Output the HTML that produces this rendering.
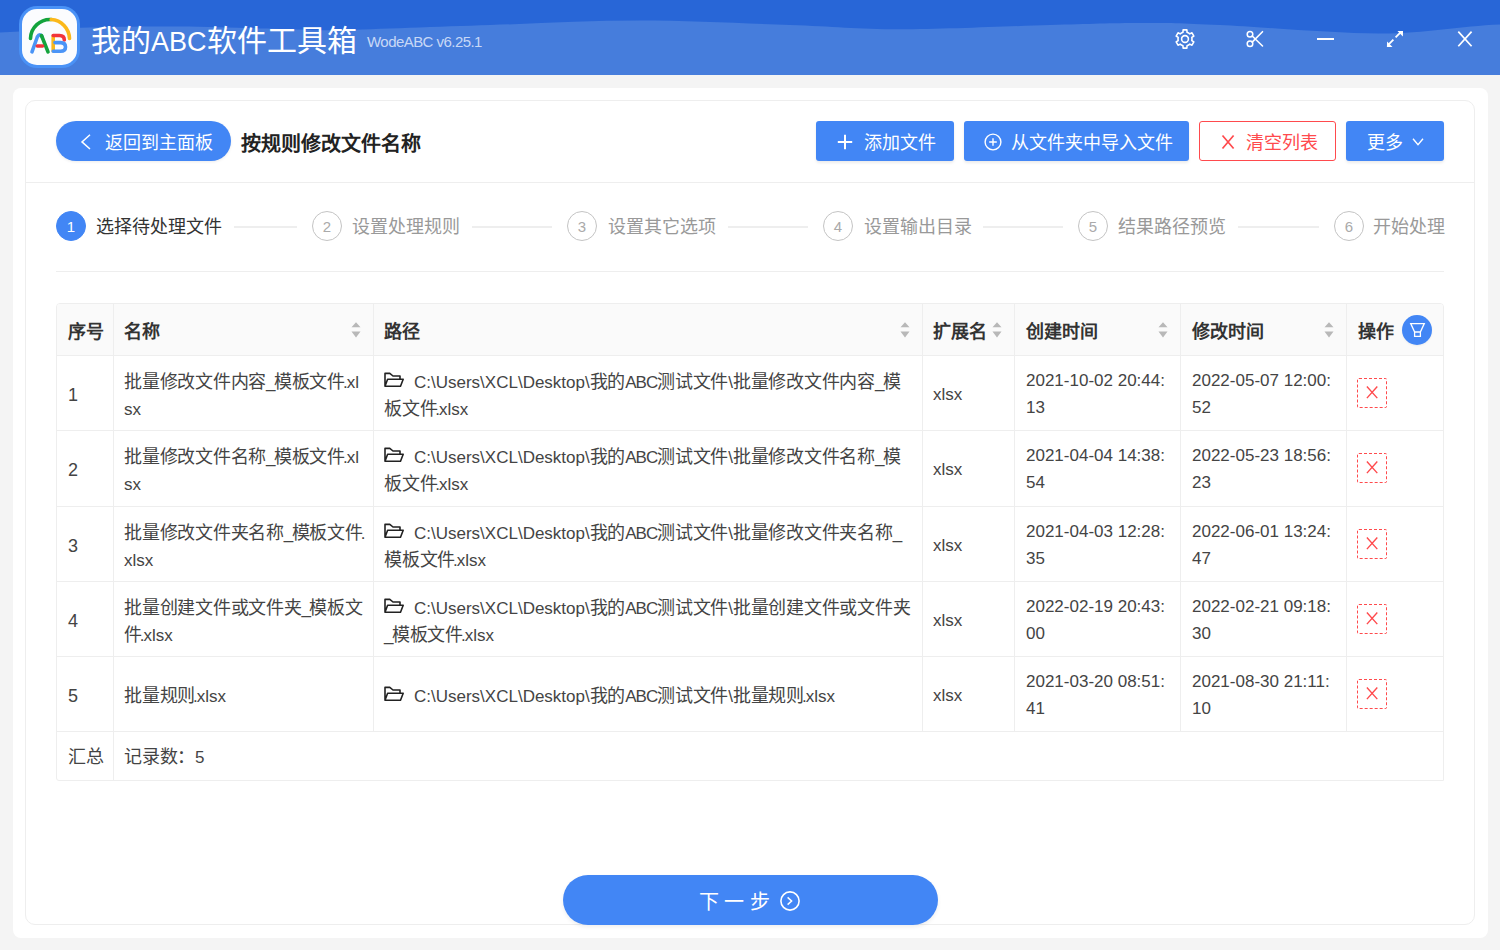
<!DOCTYPE html>
<html lang="zh-CN">
<head>
<meta charset="utf-8">
<style>
*{box-sizing:border-box;margin:0;padding:0}
html,body{width:1500px;height:950px;overflow:hidden;background:#f4f4f4;font-family:"Liberation Sans",sans-serif;color:#333}
.a{position:absolute;white-space:nowrap}
svg{position:absolute;overflow:visible}
#hdr{position:absolute;left:0;top:0;width:1500px;height:75px;background:#467ddc;overflow:hidden}
.ttl{left:91px;top:21px;font-size:30px;color:#fff;line-height:40px}
.ttl .l{font-size:27px}
.ver{left:367px;top:32px;font-size:15px;letter-spacing:-0.55px;color:#c8d8f6;line-height:20px}
#outer{position:absolute;left:13px;top:88px;width:1475px;height:850px;background:#fff;border-radius:8px}
#inner{position:absolute;left:25px;top:100px;width:1450px;height:825px;border:1px solid #eeeeee;border-radius:10px}
.hline{position:absolute;height:1px;background:#eeeeee}
.btn{position:absolute;height:40px;border-radius:3px;background:#4286f5;box-shadow:0 2px 3px rgba(0,0,0,.08)}
.bt{position:absolute;top:131px;font-size:18px;line-height:24px;color:#fff;white-space:nowrap}
.step-c{position:absolute;width:30px;height:30px;border-radius:50%;border:1px solid #c4c4c4;color:#aaa;font-size:15px;line-height:30px;text-align:center;top:211px}
.step-t{position:absolute;top:215px;font-size:18px;line-height:24px;color:#999;white-space:nowrap}
.step-l{position:absolute;top:226px;height:2px;background:#eeeeee}
.th{position:absolute;font-size:18px;font-weight:bold;color:#333;line-height:24px;top:320px;white-space:nowrap}
.vl{position:absolute;width:1px;background:#eeeeee}
.cell{position:absolute;font-size:18px;line-height:27px;color:#444}
.l{font-size:17px;letter-spacing:0}
.cell{font-size:18px;letter-spacing:-0.25px}
.u{letter-spacing:-1.5px}
.dot{margin-left:-2px;letter-spacing:-1px}
.abc{letter-spacing:-1px}
.del{position:absolute;width:30px;height:30px;border:1px dashed #ff4a4d;border-radius:2px;left:1357px}
</style>
</head>
<body>
<div id="hdr">
  <svg width="1500" height="75" viewBox="0 0 1500 75" style="left:0;top:0">
    <path d="M0 0 H1500 V24.4 C1460.0 25.9 1426.7 33.3 1380 33.4 C1333.3 33.5 1260.0 26.7 1220 25 C1180.0 23.3 1168.3 23.0 1140 23 C1111.7 23.0 1090.0 23.9 1050 25 C1010.0 26.1 943.3 29.3 900 29.3 C856.7 29.3 833.3 26.4 790 25 C746.7 23.6 690.0 20.6 640 20.6 C590.0 20.6 540.0 23.4 490 25 C440.0 26.6 375.0 29.3 340 30 C305.0 30.7 306.7 29.6 280 29 C253.3 28.4 213.3 26.7 180 26.5 C146.7 26.3 110.0 26.8 80 27.8 C50.0 28.8 26.7 31.7 0 32.5 Z" fill="#2866d7"/>
  </svg>
  <div class="a" style="left:19px;top:6px;width:61px;height:62px;border-radius:18px;background:#4a92f6"></div>
  <div class="a" style="left:22px;top:9px;width:55px;height:56px;border-radius:15px;background:#fbfcfe"></div>
  <svg width="100" height="75" viewBox="0 0 100 75" style="left:0;top:0">
    <g fill="none" stroke-width="3.6" stroke-linecap="round" stroke-linejoin="round">
      <path d="M30.5 38.5 A19.5 19.5 0 0 1 51.2 19.5" stroke="#13a33c"/>
      <path d="M51.2 19.5 A19.5 19.5 0 0 1 69.5 38.5" stroke="#fbb81a"/>
      <path d="M32 51.8 L37.3 37 Q39.8 32.8 42.2 37" stroke="#4a94f7"/>
      <path d="M41.5 35.5 L48 51.8" stroke="#13a33c"/>
      <path d="M37.3 46 H42.6" stroke="#f2333a"/>
      <path d="M53.2 36 V51" stroke="#fbb81a"/>
      <path d="M53.2 35.5 H59.5 Q64.3 35.5 64.3 40" stroke="#f2333a"/>
      <path d="M55 42.6 H60.5 Q65.5 42.6 65.5 47 Q65.5 51.3 60.5 51.3 H53.2" stroke="#4a94f7"/>
    </g>
  </svg>
  <div class="a ttl">我的<span class="l">ABC</span>软件工具箱</div>
  <div class="a ver">WodeABC v6.25.1</div>
  <svg width="20" height="20" viewBox="0 0 20 20" style="left:1175px;top:29px">
    <path d="M6.50 3.94 L7.93 3.31 L8.15 0.89 L11.85 0.89 L12.07 3.31 L13.50 3.94 L14.76 4.86 L16.97 3.84 L18.82 7.04 L16.83 8.45 L17.00 10.00 L16.83 11.55 L18.82 12.96 L16.97 16.16 L14.76 15.14 L13.50 16.06 L12.07 16.69 L11.85 19.11 L8.15 19.11 L7.93 16.69 L6.50 16.06 L5.24 15.14 L3.03 16.16 L1.18 12.96 L3.17 11.55 L3.00 10.00 L3.17 8.45 L1.18 7.04 L3.03 3.84 L5.24 4.86 Z" fill="none" stroke="#fff" stroke-width="1.6" stroke-linejoin="round"/>
    <circle cx="10" cy="10" r="3.4" fill="none" stroke="#fff" stroke-width="1.6"/>
  </svg>
  <svg width="20" height="20" viewBox="0 0 20 20" style="left:1245px;top:29px">
    <circle cx="5" cy="5.3" r="2.8" fill="none" stroke="#fff" stroke-width="1.5"/>
    <circle cx="5" cy="14.8" r="2.8" fill="none" stroke="#fff" stroke-width="1.5"/>
    <path d="M7.2 7 L17.5 17 M7.2 13.1 L17.5 2.7" stroke="#fff" stroke-width="1.6" stroke-linecap="round"/>
  </svg>
  <div class="a" style="left:1317px;top:38px;width:17px;height:2px;background:#fff"></div>
  <svg width="20" height="20" viewBox="0 0 20 20" style="left:1385px;top:29px">
    <path d="M10.6 8.3 L15.3 3.6 M8.4 10.6 L3.7 15.3" stroke="#fff" stroke-width="1.8"/>
    <path d="M18 1.9 L17.9 7.5 L12.4 2 Z M1.9 18 L2.1 12.5 L7.5 18 Z" fill="#fff"/>
  </svg>
  <svg width="20" height="20" viewBox="0 0 20 20" style="left:1455px;top:29px">
    <path d="M3.3 2.6 L16.6 17.3 M16.6 2.6 L3.3 17.3" stroke="#fff" stroke-width="1.7"/>
  </svg>
</div>
<div id="outer"></div>
<div id="inner"></div>
<!-- toolbar -->
<div class="a" style="left:56px;top:121px;width:175px;height:40px;border-radius:20px;background:#4286f5;box-shadow:0 1px 3px rgba(0,0,0,.08)"></div>
<svg width="12" height="18" viewBox="0 0 12 18" style="left:80px;top:133px"><path d="M10 1.8 L2 8.9 L10 16" fill="none" stroke="#fff" stroke-width="1.5"/></svg>
<div class="bt" style="left:105px">返回到主面板</div>
<div class="a" style="left:241px;top:131px;font-size:20px;line-height:26px;font-weight:bold;color:#222">按规则修改文件名称</div>

<div class="btn" style="left:816px;top:121px;width:138px"></div>
<svg width="16" height="16" viewBox="0 0 16 16" style="left:837px;top:134px"><path d="M8 0.8 V15.2 M0.8 8 H15.2" stroke="#fff" stroke-width="2"/></svg>
<div class="bt" style="left:864px">添加文件</div>
<div class="btn" style="left:964px;top:121px;width:225px"></div>
<svg width="20" height="20" viewBox="0 0 20 20" style="left:982.5px;top:132px"><circle cx="10" cy="10" r="7.9" fill="none" stroke="#fff" stroke-width="1.4"/><path d="M10 6.2 V13.8 M6.2 10 H13.8" stroke="#fff" stroke-width="1.4"/></svg>
<div class="bt" style="left:1011px">从文件夹中导入文件</div>
<div class="a" style="left:1199px;top:121px;width:137px;height:40px;border:1px solid #ff4a4d;border-radius:3px;background:#fff"></div>
<svg width="14" height="16" viewBox="0 0 14 16" style="left:1220.5px;top:134px"><path d="M1.5 1.5 L12.6 14.5 M12.6 1.5 L1.5 14.5" stroke="#ff4a4d" stroke-width="1.7"/></svg>
<div class="bt" style="left:1246px;color:#ff4a4d">清空列表</div>
<div class="btn" style="left:1346px;top:121px;width:98px"></div>
<div class="bt" style="left:1367px">更多</div>
<svg width="14" height="10" viewBox="0 0 14 10" style="left:1410.5px;top:137px"><path d="M2 1.8 L7 7.6 L12 1.8" fill="none" stroke="#fff" stroke-width="1.4"/></svg>

<div class="hline" style="left:26px;top:182px;width:1448px"></div>

<!-- steps -->
<div class="step-c" style="left:56px;background:#4286f5;border-color:#4286f5;color:#fff">1</div>
<div class="step-t" style="left:96px;color:#333">选择待处理文件</div>
<div class="step-l" style="left:234px;width:63px"></div>
<div class="step-c" style="left:312px">2</div>
<div class="step-t" style="left:352px">设置处理规则</div>
<div class="step-l" style="left:472px;width:80px"></div>
<div class="step-c" style="left:567px">3</div>
<div class="step-t" style="left:608px">设置其它选项</div>
<div class="step-l" style="left:728px;width:80px"></div>
<div class="step-c" style="left:823px">4</div>
<div class="step-t" style="left:864px">设置输出目录</div>
<div class="step-l" style="left:983px;width:80px"></div>
<div class="step-c" style="left:1078px">5</div>
<div class="step-t" style="left:1118px">结果路径预览</div>
<div class="step-l" style="left:1238px;width:81px"></div>
<div class="step-c" style="left:1334px">6</div>
<div class="step-t" style="left:1373px">开始处理</div>

<div class="hline" style="left:56px;top:271px;width:1388px"></div>
<!-- table -->
<div class="a" style="left:56px;top:303px;width:1388px;height:478px;border:1px solid #eeeeee;border-radius:4px 4px 0 3px"></div>
<div class="a" style="left:57px;top:304px;width:1386px;height:51px;background:#fafafa;border-radius:3px 3px 0 0"></div>

<div class="th" style="left:68px">序号</div>
<div class="th" style="left:124px">名称</div>
<div class="th" style="left:384px">路径</div>
<div class="th" style="left:933px">扩展名</div>
<div class="th" style="left:1026px">创建时间</div>
<div class="th" style="left:1192px">修改时间</div>
<div class="th" style="left:1358px">操作</div>
<svg width="10" height="16" viewBox="0 0 10 16" style="left:350.5px;top:321.5px"><path d="M0.5 5.3 L5 0.3 L9.5 5.3 Z M0.5 9.6 L5 15.4 L9.5 9.6 Z" fill="#b8b8b8"/></svg>
<svg width="10" height="16" viewBox="0 0 10 16" style="left:900px;top:321.5px"><path d="M0.5 5.3 L5 0.3 L9.5 5.3 Z M0.5 9.6 L5 15.4 L9.5 9.6 Z" fill="#b8b8b8"/></svg>
<svg width="10" height="16" viewBox="0 0 10 16" style="left:991.5px;top:321.5px"><path d="M0.5 5.3 L5 0.3 L9.5 5.3 Z M0.5 9.6 L5 15.4 L9.5 9.6 Z" fill="#b8b8b8"/></svg>
<svg width="10" height="16" viewBox="0 0 10 16" style="left:1158px;top:321.5px"><path d="M0.5 5.3 L5 0.3 L9.5 5.3 Z M0.5 9.6 L5 15.4 L9.5 9.6 Z" fill="#b8b8b8"/></svg>
<svg width="10" height="16" viewBox="0 0 10 16" style="left:1324px;top:321.5px"><path d="M0.5 5.3 L5 0.3 L9.5 5.3 Z M0.5 9.6 L5 15.4 L9.5 9.6 Z" fill="#b8b8b8"/></svg>
<div class="a" style="left:1402px;top:315px;width:30px;height:30px;border-radius:50%;background:#4286f5;box-shadow:0 1px 2px rgba(0,0,0,.06)"></div>
<svg width="30" height="30" viewBox="0 0 30 30" style="left:1402px;top:315px"><path d="M8.7 8.6 H22.3 L18.4 17 V21.4 H12.6 V17 Z M12.6 17 H18.4" fill="none" stroke="#fff" stroke-width="1.3" stroke-linejoin="miter"/></svg>

<div class="hline" style="left:57px;top:355px;width:1386px"></div>
<div class="hline" style="left:57px;top:430px;width:1386px"></div>
<div class="hline" style="left:57px;top:506px;width:1386px"></div>
<div class="hline" style="left:57px;top:581px;width:1386px"></div>
<div class="hline" style="left:57px;top:656px;width:1386px"></div>
<div class="hline" style="left:57px;top:731px;width:1386px"></div>

<div class="vl" style="left:113px;top:304px;height:476px"></div>
<div class="vl" style="left:373px;top:304px;height:427px"></div>
<div class="vl" style="left:922px;top:304px;height:427px"></div>
<div class="vl" style="left:1014px;top:304px;height:427px"></div>
<div class="vl" style="left:1180px;top:304px;height:427px"></div>
<div class="vl" style="left:1346px;top:304px;height:427px"></div>
<div class="cell a num" style="left:68px;top:382px">1</div>
<div class="cell a" style="left:124px;top:369px">批量修改文件内容<span class="l"><span class="u">_</span></span>模板文件<span class="l"><span class="dot">.</span>xl</span><br><span class="l">sx</span></div>
<svg width="22" height="16" viewBox="0 0 22 16" style="left:383px;top:372px"><path d="M17 7 V4 H10 L6.8 1.4 H2 V14.3 H17.5 L20.2 7.3 H4.6 L2 14.3" fill="none" stroke="#222" stroke-width="1.6" stroke-linejoin="round"/></svg>
<div class="cell a" style="left:414px;top:369px"><span class="l">C:\Users\XCL\Desktop\</span>我的<span class="l"><span class="abc">ABC</span></span>测试文件<span class="l">\</span>批量修改文件内容<span class="l"><span class="u">_</span></span>模</div>
<div class="cell a" style="left:384px;top:396px">板文件<span class="l"><span class="dot">.</span>xlsx</span></div>
<div class="cell a" style="left:933px;top:381px"><span class="l">xlsx</span></div>
<div class="cell a" style="left:1026px;top:367px"><span class="l">2021-10-02 20:44:</span><br><span class="l">13</span></div>
<div class="cell a" style="left:1192px;top:367px"><span class="l">2022-05-07 12:00:</span><br><span class="l">52</span></div>
<div class="del" style="top:378px"><svg width="28" height="28" viewBox="0 0 28 28" style="left:-1px;top:-1px"><path d="M9.9 8.5 L20.3 20.1 M20.3 8.5 L9.9 20.1" stroke="#ff4a4d" stroke-width="1.4"/></svg></div>
<div class="cell a num" style="left:68px;top:457px">2</div>
<div class="cell a" style="left:124px;top:444px">批量修改文件名称<span class="l"><span class="u">_</span></span>模板文件<span class="l"><span class="dot">.</span>xl</span><br><span class="l">sx</span></div>
<svg width="22" height="16" viewBox="0 0 22 16" style="left:383px;top:447px"><path d="M17 7 V4 H10 L6.8 1.4 H2 V14.3 H17.5 L20.2 7.3 H4.6 L2 14.3" fill="none" stroke="#222" stroke-width="1.6" stroke-linejoin="round"/></svg>
<div class="cell a" style="left:414px;top:444px"><span class="l">C:\Users\XCL\Desktop\</span>我的<span class="l"><span class="abc">ABC</span></span>测试文件<span class="l">\</span>批量修改文件名称<span class="l"><span class="u">_</span></span>模</div>
<div class="cell a" style="left:384px;top:471px">板文件<span class="l"><span class="dot">.</span>xlsx</span></div>
<div class="cell a" style="left:933px;top:456px"><span class="l">xlsx</span></div>
<div class="cell a" style="left:1026px;top:442px"><span class="l">2021-04-04 14:38:</span><br><span class="l">54</span></div>
<div class="cell a" style="left:1192px;top:442px"><span class="l">2022-05-23 18:56:</span><br><span class="l">23</span></div>
<div class="del" style="top:453px"><svg width="28" height="28" viewBox="0 0 28 28" style="left:-1px;top:-1px"><path d="M9.9 8.5 L20.3 20.1 M20.3 8.5 L9.9 20.1" stroke="#ff4a4d" stroke-width="1.4"/></svg></div>
<div class="cell a num" style="left:68px;top:533px">3</div>
<div class="cell a" style="left:124px;top:520px">批量修改文件夹名称<span class="l"><span class="u">_</span></span>模板文件<span class="l"><span class="dot">.</span></span><br><span class="l">xlsx</span></div>
<svg width="22" height="16" viewBox="0 0 22 16" style="left:383px;top:523px"><path d="M17 7 V4 H10 L6.8 1.4 H2 V14.3 H17.5 L20.2 7.3 H4.6 L2 14.3" fill="none" stroke="#222" stroke-width="1.6" stroke-linejoin="round"/></svg>
<div class="cell a" style="left:414px;top:520px"><span class="l">C:\Users\XCL\Desktop\</span>我的<span class="l"><span class="abc">ABC</span></span>测试文件<span class="l">\</span>批量修改文件夹名称<span class="l"><span class="u">_</span></span></div>
<div class="cell a" style="left:384px;top:547px">模板文件<span class="l"><span class="dot">.</span>xlsx</span></div>
<div class="cell a" style="left:933px;top:532px"><span class="l">xlsx</span></div>
<div class="cell a" style="left:1026px;top:518px"><span class="l">2021-04-03 12:28:</span><br><span class="l">35</span></div>
<div class="cell a" style="left:1192px;top:518px"><span class="l">2022-06-01 13:24:</span><br><span class="l">47</span></div>
<div class="del" style="top:529px"><svg width="28" height="28" viewBox="0 0 28 28" style="left:-1px;top:-1px"><path d="M9.9 8.5 L20.3 20.1 M20.3 8.5 L9.9 20.1" stroke="#ff4a4d" stroke-width="1.4"/></svg></div>
<div class="cell a num" style="left:68px;top:608px">4</div>
<div class="cell a" style="left:124px;top:595px">批量创建文件或文件夹<span class="l"><span class="u">_</span></span>模板文<br>件<span class="l"><span class="dot">.</span>xlsx</span></div>
<svg width="22" height="16" viewBox="0 0 22 16" style="left:383px;top:598px"><path d="M17 7 V4 H10 L6.8 1.4 H2 V14.3 H17.5 L20.2 7.3 H4.6 L2 14.3" fill="none" stroke="#222" stroke-width="1.6" stroke-linejoin="round"/></svg>
<div class="cell a" style="left:414px;top:595px"><span class="l">C:\Users\XCL\Desktop\</span>我的<span class="l"><span class="abc">ABC</span></span>测试文件<span class="l">\</span>批量创建文件或文件夹</div>
<div class="cell a" style="left:384px;top:622px"><span class="l"><span class="u">_</span></span>模板文件<span class="l"><span class="dot">.</span>xlsx</span></div>
<div class="cell a" style="left:933px;top:607px"><span class="l">xlsx</span></div>
<div class="cell a" style="left:1026px;top:593px"><span class="l">2022-02-19 20:43:</span><br><span class="l">00</span></div>
<div class="cell a" style="left:1192px;top:593px"><span class="l">2022-02-21 09:18:</span><br><span class="l">30</span></div>
<div class="del" style="top:604px"><svg width="28" height="28" viewBox="0 0 28 28" style="left:-1px;top:-1px"><path d="M9.9 8.5 L20.3 20.1 M20.3 8.5 L9.9 20.1" stroke="#ff4a4d" stroke-width="1.4"/></svg></div>
<div class="cell a num" style="left:68px;top:683px">5</div>
<div class="cell a" style="left:124px;top:683px">批量规则<span class="l"><span class="dot">.</span>xlsx</span></div>
<svg width="22" height="16" viewBox="0 0 22 16" style="left:383px;top:686px"><path d="M17 7 V4 H10 L6.8 1.4 H2 V14.3 H17.5 L20.2 7.3 H4.6 L2 14.3" fill="none" stroke="#222" stroke-width="1.6" stroke-linejoin="round"/></svg>
<div class="cell a" style="left:414px;top:683px"><span class="l">C:\Users\XCL\Desktop\</span>我的<span class="l"><span class="abc">ABC</span></span>测试文件<span class="l">\</span>批量规则<span class="l"><span class="dot">.</span>xlsx</span></div>
<div class="cell a" style="left:933px;top:682px"><span class="l">xlsx</span></div>
<div class="cell a" style="left:1026px;top:668px"><span class="l">2021-03-20 08:51:</span><br><span class="l">41</span></div>
<div class="cell a" style="left:1192px;top:668px"><span class="l">2021-08-30 21:11:</span><br><span class="l">10</span></div>
<div class="del" style="top:679px"><svg width="28" height="28" viewBox="0 0 28 28" style="left:-1px;top:-1px"><path d="M9.9 8.5 L20.3 20.1 M20.3 8.5 L9.9 20.1" stroke="#ff4a4d" stroke-width="1.4"/></svg></div><div class="cell a" style="left:68px;top:744px">汇总</div>
<div class="cell a" style="left:124px;top:744px">记录数：<span class="l">5</span></div>

<!-- next button -->
<div class="a" style="left:563px;top:875px;width:375px;height:50px;border-radius:25px;background:#4286f5;box-shadow:0 2px 4px rgba(0,0,0,.07)"></div>
<div class="a" style="left:698.5px;top:889px;font-size:20px;line-height:26px;color:#fff;letter-spacing:5.6px">下一步</div>
<svg width="22" height="22" viewBox="0 0 22 22" style="left:779px;top:890px"><circle cx="11" cy="11" r="9.1" fill="none" stroke="#fff" stroke-width="1.6"/><path d="M8.6 7.4 L12.6 11 L8.6 14.6" fill="none" stroke="#fff" stroke-width="1.5"/></svg>
</body>
</html>
